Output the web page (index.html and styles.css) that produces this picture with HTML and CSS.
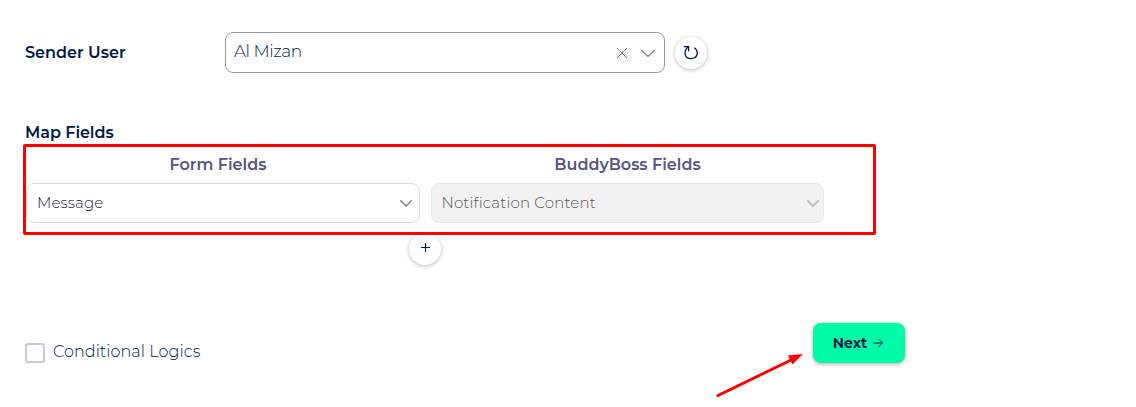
FILE: index.html
```html
<!DOCTYPE html>
<html lang="en">
<head>
<meta charset="utf-8">
<title>Map Fields</title>
<link rel="stylesheet" href="styles.css">
</head>
<body>
<main class="page">
  <section class="sender">
    <label class="label sender-label">Sender User</label>
    <div class="select sender-select">
      <span class="t-mizan">Al Mizan</span>
      <svg class="clear" width="12" height="12" viewBox="0 0 12 12"><path d="M1 1l10 10M11 1L1 11"/></svg>
      <svg class="chevron" width="16" height="9" viewBox="0 0 16 9"><path d="M1.500 1.200L8 7.500l6.500-6.300"/></svg>
    </div>
    <button class="round refresh" aria-label="Refresh">
      <svg width="16" height="16" viewBox="0 0 16 16"><path d="M1 1.700h4.600v4.500M5.300 2C.6 5.500.6 13.600 8 13.600c7.300 0 7.800-7.400 3.400-10.900"/></svg>
    </button>
  </section>
  <h2 class="label map-title">Map Fields</h2>
  <section class="map-box">
    <div class="heading heading-form"><span>Form Fields</span></div>
    <div class="heading"><span>BuddyBoss Fields</span></div>
    <div class="select field">
      <span class="t-message">Message</span>
      <svg class="field-chevron" width="14" height="9" viewBox="0 0 14 9"><path d="M1.300 1.300L7 7l5.700-5.700"/></svg>
    </div>
    <div class="select field disabled">
      <span class="t-content">Notification Content</span>
      <svg class="field-chevron" width="14" height="9" viewBox="0 0 14 9"><path d="M1.300 1.300L7 7l5.700-5.700"/></svg>
    </div>
  </section>
  <button class="round add" aria-label="Add field">
    <svg width="9" height="9" viewBox="0 0 9 9"><path d="M0 4.500h9M4.500 0v9"/></svg>
  </button>
  <footer class="footer">
    <label class="condition"><span class="box"></span><span class="t-cond">Conditional Logics</span></label>
    <svg class="pointer" width="88" height="46" viewBox="0 0 88 46"><path class="shaft" d="M2 43.500L76 7.500"/><path class="head" d="M87 2L72 3.500l4.500 9z"/></svg>
    <button class="next"><span>Next</span>
      <svg width="10" height="10" viewBox="0 0 10 10"><path d="M.3 5h9M5.500 1l4 4-4 4"/></svg>
    </button>
  </footer>
</main>
</body>
</html>
```
FILE: styles.css
```css
* { box-sizing: border-box; }
body { margin: 0; background: #fff; color: #00194c; font: 16px/20px Montserrat, Inter, sans-serif; overflow: hidden; }
button { border: 0; font: inherit; color: inherit; padding: 0; }
span { white-space: nowrap; }
svg { display: block; flex: none; fill: none; stroke: currentColor; }
.page { height: 407px; padding-top: 32px; display: flex; flex-direction: column; align-items: flex-start; }
.label { font-size: 16px; font-weight: 600; margin: 0; }
.sender { display: flex; align-items: center; height: 41px; padding-left: 25px; }
.sender-label { width: 200px; }
.select { display: flex; align-items: center; border: 1px solid #999; border-radius: 8px; font-weight: 300; }
.sender-select { width: 440px; height: 41px; padding: 0 8px 3px; font-size: 17px; }
.t-mizan { letter-spacing: -.45px; font-weight: 350; }
.clear { margin: 4px 12px 0 auto; color: #777; }
.chevron { margin-top: 4px; color: #777; stroke-width: 1.200; }
.round { display: flex; align-items: center; justify-content: center; width: 32px; height: 32px; border-radius: 50%; background: #fff; box-shadow: 0 1px 4px rgba(0, 0, 0, .28); }
.refresh { margin-left: 10px; margin-top: 1px; }
.refresh svg { stroke-width: 1.300; }
.map-title { padding-left: 25px; margin-top: 50px; height: 21px; letter-spacing: -.04px; }
.map-box { display: grid; grid-template-columns: 394px 393px; grid-template-rows: 36px 40px; column-gap: 11px; width: 853px; height: 91px; margin-left: 23px; border: 3px solid #f00; border-radius: 2px; background: #fff; position: relative; z-index: 1; }
.heading { display: flex; align-items: center; justify-content: center; font-weight: 600; color: #55557f; }
.heading-form { padding-right: 10px; }
.field { height: 40px; padding: 0 6px 0 10px; font-size: 15px; color: #17213f; border-color: #ddd; }
.t-message { letter-spacing: .12px; }
.t-content { letter-spacing: .18px; margin-left: -.5px; }
.t-message, .t-content { padding-bottom: 1px; }
.field-chevron { margin-left: auto; color: #888; stroke-width: 1.600; }
.disabled { background: #f2f2f2; color: #555; border-color: #e8e8e8; padding-right: 3px; }
.disabled .field-chevron { color: #bdbfc7; stroke-width: 2.200; }
.add { margin: -2px 0 0 409px; }
.add svg { margin-bottom: 3px; stroke-width: 1.100; }
.footer { display: flex; width: 905px; height: 76px; margin-top: 58px; padding-left: 25px; }
.condition { display: flex; align-items: center; gap: 8px; height: 20px; margin-top: 20px; font-weight: 350; }
.box { width: 20px; height: 20px; border: 2px solid #c6cad5; border-radius: 3px; }
.t-cond { margin-top: -3px; letter-spacing: .08px; }
.pointer { margin: 29px 9px 0 auto; }
.shaft { stroke: #f00; stroke-width: 3; stroke-linecap: round; }
.head { fill: #f00; stroke: none; }
.next { display: flex; align-items: center; justify-content: center; gap: 6px; width: 92px; height: 40px; padding-right: 2px; border-radius: 8px; background: #00faa5; box-shadow: 0 1px 4px rgba(0, 0, 0, .35); font-size: 14px; font-weight: 700; }
```
